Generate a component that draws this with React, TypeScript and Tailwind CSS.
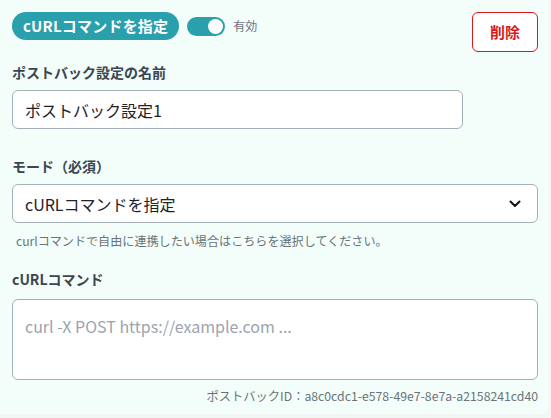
import React from "react";

export default function App() {
  return (
    <div
      className="w-[551px] h-[418px] bg-[#f4f6f5] overflow-hidden"
      style={{ fontFamily: '"Noto Sans CJK JP", "Noto Sans", sans-serif' }}
    >
      <div className="w-[549px] h-[414px] bg-[#f3fdf9] rounded-br-[6px] pl-3 pr-[11px] pt-3">
        <div className="flex items-start justify-between">
          <div className="flex items-center">
            <span className="h-[28px] px-[11px] rounded-full bg-[#2aa0ad] text-white font-bold text-[15px] leading-[28px] tracking-[0.2px]">
              cURLコマンドを指定
            </span>
            <div className="ml-[8px] w-[38px] h-[19px] rounded-full bg-[#2aa0ad] flex items-center justify-end pr-[2px]">
              <div className="w-[15px] h-[15px] rounded-full bg-white" />
            </div>
            <span className="ml-[8px] text-[12px] text-[#6b7280]">有効</span>
          </div>
          <button className="w-[66px] h-[40px] rounded-[6px] border border-[#d7191f] bg-white text-[#d7191f] font-bold text-[15px]">
            削除
          </button>
        </div>

        <div className="mt-[10px] h-[20px] text-[14px] leading-[20px] font-bold text-[#3a4750]">
          ポストバック設定の名前
        </div>
        <div className="mt-[8px] w-[451px] h-[39px] rounded-[6px] border border-[#a3b1b7] bg-white flex items-center px-[12px] text-[16px] text-[#1f2329]">
          ポストバック設定1
        </div>

        <div className="mt-[27px] h-[20px] text-[14px] leading-[20px] font-bold text-[#3a4750]">
          モード（必須）
        </div>
        <div className="mt-[8px] w-[526px] h-[39px] rounded-[6px] border border-[#a3b1b7] bg-white flex items-center justify-between pl-[12px] pr-[16px] text-[16px] text-[#1f2329]">
          <span>cURLコマンドを指定</span>
          <svg width="12" height="8" viewBox="0 0 12 8" fill="none">
            <path d="M1.5 1.5L6 6L10.5 1.5" stroke="#111" strokeWidth="2" strokeLinecap="round" strokeLinejoin="round" />
          </svg>
        </div>
        <div className="mt-[10px] h-[16px] pl-[4px] text-[12.1px] leading-[16px] text-[#6b7378]">
          curlコマンドで自由に連携したい場合はこちらを選択してください。
        </div>

        <div className="mt-[20px] h-[20px] text-[14px] leading-[20px] font-bold text-[#3a4750]">
          cURLコマンド
        </div>
        <div className="mt-[10px] w-[526px] h-[81px] rounded-[6px] border border-[#a3b1b7] bg-white px-[12px] pt-[14px] text-[16px] leading-[24px] text-[#9ca3af]">
          curl -X POST https://example.com ...
        </div>
        <div className="mt-[8px] w-[526px] h-[16px] text-right text-[12.25px] leading-[16px] text-[#6b7378]">
          ポストバックID：a8c0cdc1-e578-49e7-8e7a-a2158241cd40
        </div>
      </div>
    </div>
  );
}
